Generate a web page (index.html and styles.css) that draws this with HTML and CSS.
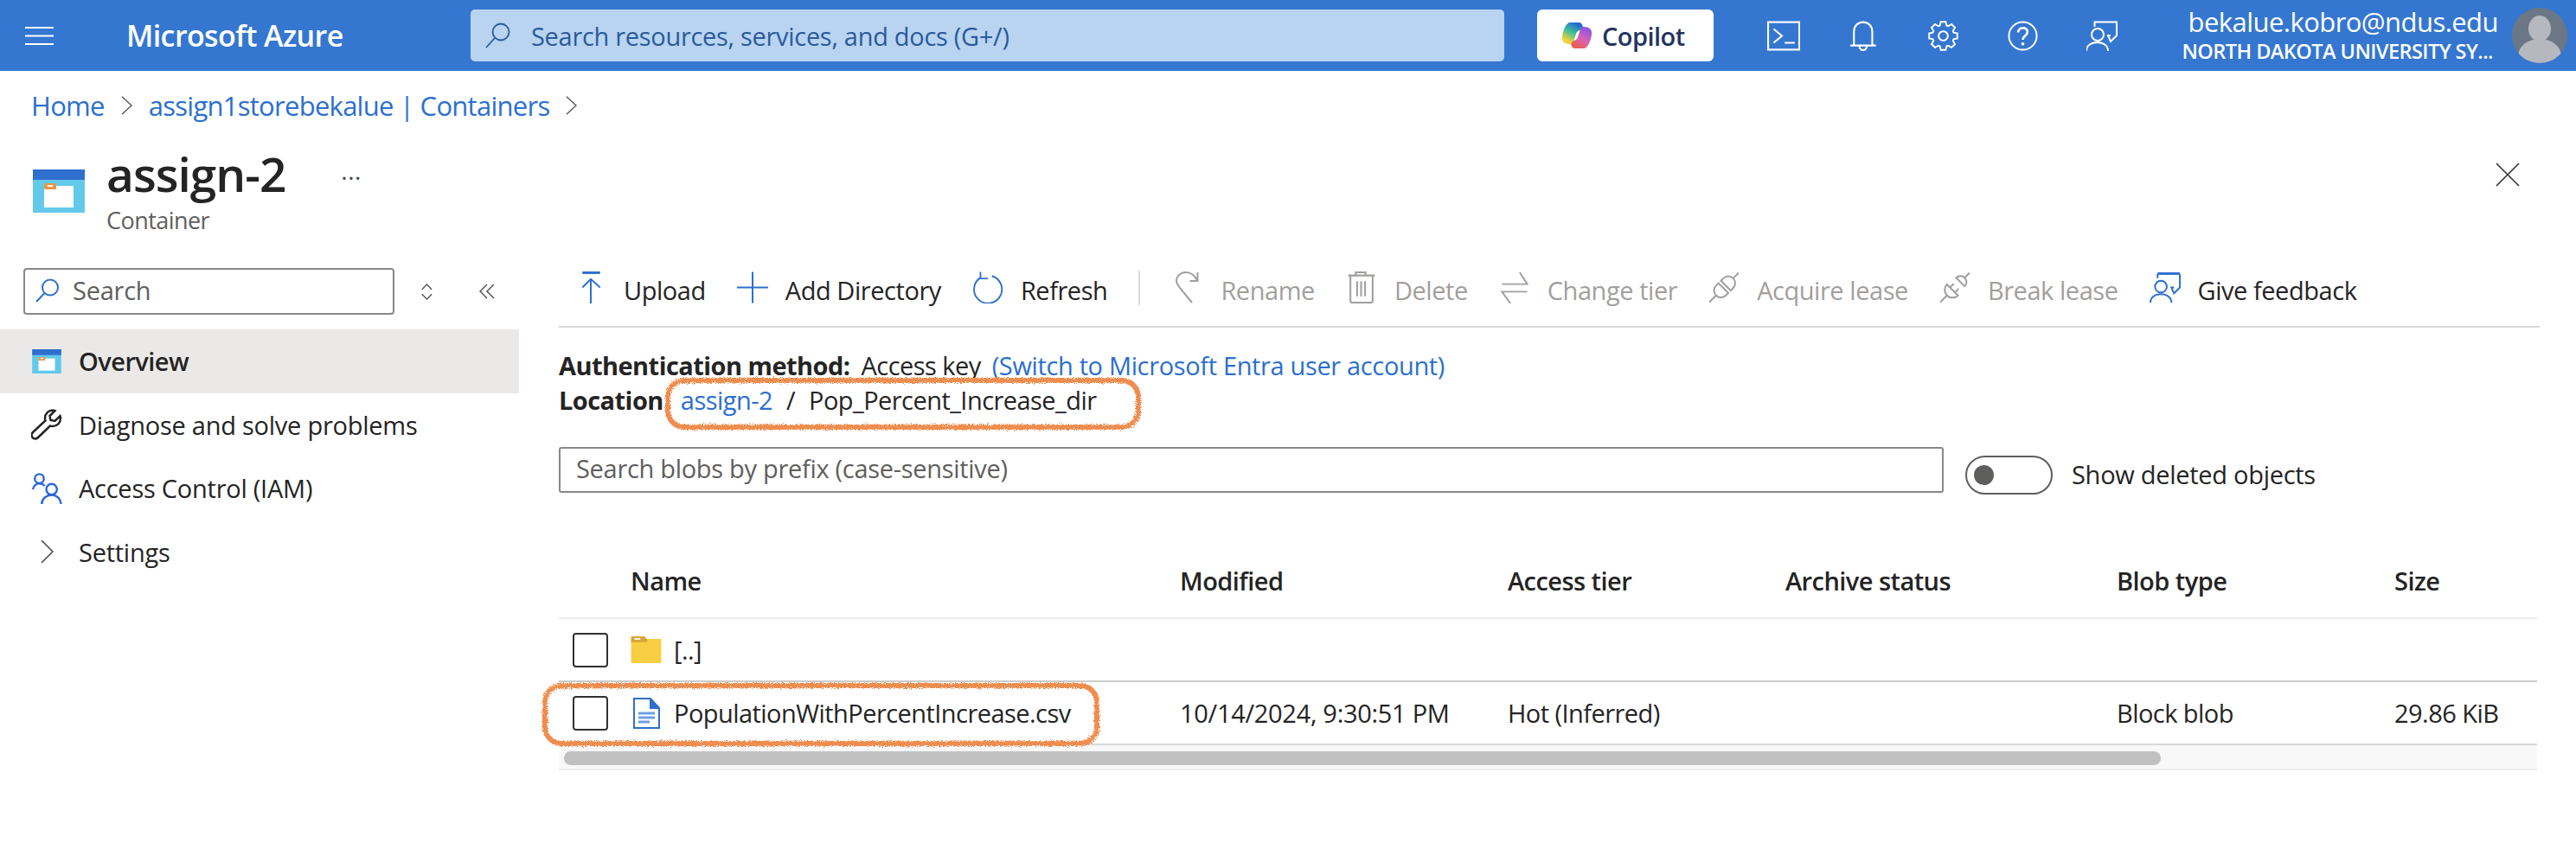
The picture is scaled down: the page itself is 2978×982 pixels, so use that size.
FILE: index.html
```html
<!DOCTYPE html>
<html lang="en">
<head>
  <meta charset="UTF-8" />
  <title>assign-2 - Microsoft Azure</title>
  <link rel="stylesheet" href="styles.css">
</head>
<body>

  <svg class="defs" width="0" height="0">
    <defs>
      <symbol id="containerIcon" viewBox="0 0 60 50">
        <rect width="60" height="50" fill="#62c9ea"/>
        <rect width="60" height="12" fill="#2f6fce"/>
        <rect x="13" y="19" width="34" height="25" fill="#fff"/>
        <rect x="13" y="16" width="14" height="7" rx="1" fill="#e8974a"/>
        <rect x="17" y="18" width="6" height="2" fill="#fff"/>
      </symbol>
      <filter id="rough">
        <feTurbulence type="fractalNoise" baseFrequency="1.1" numOctaves="2" seed="3"/>
        <feDisplacementMap in="SourceGraphic" scale="6"/>
      </filter>
    </defs>
  </svg>

  <!-- Top bar -->
  <header class="topbar">
    <svg class="menu-icon" viewBox="0 0 33 21"><path d="M0 1h33M0 10.500h33M0 20h33"/></svg>
    <div class="brand">Microsoft Azure</div>
    <div class="global-search">
      <svg class="global-search-icon" viewBox="0 0 30 30"><circle cx="18" cy="11" r="9.500"/><path d="M11 18L1 29"/></svg>
      <span>Search resources, services, and docs (G+/)</span>
    </div>
    <div class="copilot">
      <svg class="copilot-logo" viewBox="0 0 36 32">
        <defs>
          <linearGradient id="copA" x1="0.7" y1="0" x2="0.2" y2="1"><stop offset="0" stop-color="#1f62d8"/><stop offset="0.45" stop-color="#3dbd9a"/><stop offset="0.85" stop-color="#f0d23c"/></linearGradient>
          <linearGradient id="copB" x1="0.7" y1="0" x2="0.2" y2="1"><stop offset="0" stop-color="#8a55e4"/><stop offset="0.55" stop-color="#dc62b0"/><stop offset="1" stop-color="#e8613a"/></linearGradient>
        </defs>
        <path d="M10 1h10c3 0 4 2 5 5l-3 4c-3 0-4 2-5 4l-3 9c-1 3-2 3-4 3-6 0-10-3-9-9C2 9 6 1 10 1z" fill="url(#copA)"/>
        <path d="M26 31H16c-3 0-4-2-5-5l3-4c3 0 4-2 5-4l3-9c1-3 2-3 4-3 6 0 10 3 9 9-1 8-5 16-9 16z" fill="url(#copB)"/>
      </svg>
      <span>Copilot</span>
    </div>
    <div class="top-icons">
      <div class="top-icon">
        <svg viewBox="0 0 36 33"><rect x="1" y="1.500" width="34" height="30"/><path d="M7 9l9 7.500-9 7.500M19 24h11"/></svg>
      </div>
      <div class="top-icon">
        <svg viewBox="0 0 28 33"><path d="M4 26V12C4 6 8 1.500 14 1.500S24 6 24 12v14M0 27h28M10 27.500c0 6 8 6 8 0"/></svg>
      </div>
      <div class="top-icon">
        <svg viewBox="0 0 36 36"><polygon points="13.98,5.64 15.05,1.26 20.95,1.26 22.02,5.64 23.9,6.42 27.75,4.07 31.93,8.25 29.58,12.1 30.36,13.98 34.74,15.05 34.74,20.95 30.36,22.02 29.58,23.9 31.93,27.75 27.75,31.93 23.9,29.58 22.02,30.36 20.95,34.74 15.05,34.74 13.98,30.36 12.1,29.58 8.25,31.93 4.07,27.75 6.42,23.9 5.64,22.02 1.26,20.95 1.26,15.05 5.64,13.98 6.42,12.1 4.07,8.25 8.25,4.07 12.1,6.42"/><circle cx="18" cy="18" r="5.500"/></svg>
      </div>
      <div class="top-icon">
        <svg viewBox="0 0 36 36"><circle cx="18" cy="18" r="16.500"/><path class="thick" d="M12.500 14c0-7 11-7 11-1 0 5-5.500 5-5.500 9.500"/><circle class="dot" cx="18" cy="27.500" r="1.900"/></svg>
      </div>
      <div class="top-icon">
        <svg viewBox="0 0 36 35"><path d="M9.500 7V1.500H35V17L28 24 25 17h3M0 35c0-6 5-10 12.500-10S25 29 25 35"/><circle cx="13" cy="16" r="7"/></svg>
      </div>
    </div>
    <div class="user">
      <div class="user-mail">bekalue.kobro@ndus.edu</div>
      <div class="user-org">NORTH DAKOTA UNIVERSITY SY...</div>
    </div>
    <div class="avatar">
      <svg viewBox="0 0 64 64"><ellipse cx="32" cy="24" rx="13" ry="15" fill="#b5b9bf"/><ellipse cx="32" cy="56" rx="25" ry="20" fill="#b5b9bf"/></svg>
    </div>
  </header>

  <nav class="breadcrumb">
    <a>Home</a>
    <svg class="crumb-sep" viewBox="0 0 14 24"><path d="M1 1l12 11L1 23"/></svg>
    <a>assign1storebekalue | Containers</a>
    <svg class="crumb-sep" viewBox="0 0 14 24"><path d="M1 1l12 11L1 23"/></svg>
  </nav>

  <div class="page-head">
    <svg class="page-icon"><use href="#containerIcon"/></svg>
    <div class="page-title">
      <h1>assign-2</h1>
      <p>Container</p>
    </div>
    <div class="page-more">...</div>
    <svg class="page-close" viewBox="0 0 28 28"><path d="M1 1l26 26M27 1L1 27"/></svg>
  </div>

  <div class="layout">
    <!-- Left menu -->
    <aside class="sidebar">
      <div class="side-top">
        <div class="side-search">
          <svg viewBox="0 0 28 28"><circle cx="17" cy="10.500" r="9"/><path d="M10.500 17L1 27"/></svg>
          <span>Search</span>
        </div>
        <svg class="side-sort" viewBox="0 0 16 20"><path d="M2 7l6-6 6 6M2 13l6 6 6-6"/></svg>
        <svg class="side-collapse" viewBox="0 0 18 18"><path d="M9 1L1 9l8 8M17 1L9 9l8 8"/></svg>
      </div>
      <div class="side-item active">
        <svg class="side-icon" viewBox="0 0 36 28"><use href="#containerIcon" width="36" height="28"/></svg>
        <span>Overview</span>
      </div>
      <div class="side-item">
        <svg class="side-icon wrench" viewBox="0 0 36 36"><path d="M25 1.500c-5 0-9 4-9 9 0 1 0 2 .5 3L2 27c-2 2-2 4-.5 6s4.500 2 6.500 0l14-13.500c1 .5 2 .5 3 .5 5 0 9-4 9-9 0-1 0-2-.5-3l-6 6-5-1-1-5 6-6c-1-.5-2-.5-3-.5z"/></svg>
        <span>Diagnose and solve problems</span>
      </div>
      <div class="side-item">
        <svg class="side-icon people" viewBox="0 0 36 38"><circle cx="9" cy="7" r="5.500"/><path d="M1 20c1-4 4-7 8-7 3 0 5 1 6.500 3"/><circle cx="24" cy="20" r="6.500"/><path d="M12 38c0-6 5-11 12-11s11 5 11.500 11"/></svg>
        <span>Access Control (IAM)</span>
      </div>
      <div class="side-item">
        <svg class="side-chevron" viewBox="0 0 15 28"><path d="M1 1l13 13L1 27"/></svg>
        <span>Settings</span>
      </div>
    </aside>

    <main class="content">
      <div class="toolbar">
        <div class="tool">
          <svg viewBox="0 0 36 38"><path class="bar" d="M8 1.500h21"/><path d="M18 38V9M8 19L18 9l11 10"/></svg>
          <span>Upload</span>
        </div>
        <div class="tool">
          <svg viewBox="0 0 36 36"><path d="M18 0v36M0 18h36"/></svg>
          <span>Add Directory</span>
        </div>
        <div class="tool">
          <svg viewBox="0 0 38 38"><path d="M10 7a17 17 0 1 0 14-2M10 0v8h9"/></svg>
          <span>Refresh</span>
        </div>
        <div class="tool-divider"></div>
        <div class="tool disabled">
          <svg viewBox="0 0 30 37"><path d="M26.500 1v10h-9M26.500 11C23 4 18 1 13 1 6 1 2 6 2 11c0 3 2 5 4 8l14 17"/></svg>
          <span>Rename</span>
        </div>
        <div class="tool disabled">
          <svg viewBox="0 0 30 36"><path d="M0 4.500h30M8.500 4V1h11v3M2.500 5v28c0 1 1 2 2 2h21c1 0 2-1 2-2V5M10 11v17M14.500 11v17M19 11v17"/></svg>
          <span>Delete</span>
        </div>
        <div class="tool disabled">
          <svg viewBox="0 0 36 38"><path d="M3 15h30L24 1M33 24H3l10 14"/></svg>
          <span>Change tier</span>
        </div>
        <div class="tool disabled">
          <svg viewBox="0 0 36 36"><g transform="rotate(45 18 18)"><path d="M18 -6V3M18 31V42M10 15v-4a8 8 0 0 1 16 0v4zM10 19h16v4a8 8 0 0 1-16 0z"/></g></svg>
          <span>Acquire lease</span>
        </div>
        <div class="tool disabled">
          <svg viewBox="0 0 36 36"><g transform="rotate(45 18 18)"><path d="M18 -6V1M11 9a7 7 0 0 1 14 0zM9 22h18a9 9 0 0 1-18 0zM14 22v-6M22 22v-6M18 31V42"/></g></svg>
          <span>Break lease</span>
        </div>
        <div class="tool">
          <svg viewBox="0 0 37 36"><path class="bar" d="M9.500 1.500H36"/><path d="M9.500 7V2M36 2v16L29 25 26 18h3M1 36c0-6 5-10 12.500-10S26 30 26 36"/><circle cx="13.500" cy="17" r="7"/></svg>
          <span>Give feedback</span>
        </div>
      </div>

      <div class="info">
        <div class="info-line"><b>Authentication method:</b> <span class="key">Access key</span> <a class="entra">(Switch to Microsoft Entra user account)</a></div>
        <div class="info-line">
          <b>Location</b>
          <span class="path">
            <a>assign-2</a><span class="slash">/</span><span>Pop_Percent_Increase_dir</span>
            <span class="scribble scribble-path"></span>
          </span>
        </div>
      </div>

      <div class="filter-row">
        <div class="blob-search">Search blobs by prefix (case-sensitive)</div>
        <div class="toggle"><span class="knob"></span></div>
        <div class="toggle-label">Show deleted objects</div>
      </div>

      <div class="blobs">
        <div class="blob-row blob-head">
          <div></div>
          <div>Name</div>
          <div>Modified</div>
          <div>Access tier</div>
          <div>Archive status</div>
          <div>Blob type</div>
          <div>Size</div>
        </div>
        <div class="blob-row">
          <div><span class="check"></span></div>
          <div class="blob-name">
            <svg class="folder-icon" viewBox="0 0 36 32"><path d="M0 3h36v29H0z" fill="#f8cf42"/><path d="M0 1c0-1 1-1 1-1h15l4 5-2 2H0z" fill="#d9a43a"/><rect x="4" y="2" width="7" height="2" fill="#fff"/></svg>
            <span>[..]</span>
          </div>
          <div></div><div></div><div></div><div></div><div></div>
        </div>
        <div class="blob-row blob-last">
          <div><span class="check"></span></div>
          <div class="blob-name">
            <svg class="file-icon" viewBox="0 0 31 36"><path d="M1 1h19l10 11v23H1z" fill="#fff" stroke="#2f6fce" stroke-width="2"/><path d="M19 0l12 13H19z" fill="#2f6fce"/><path d="M6 18h19M6 23h19M6 28h13" stroke="#6f9fe6" stroke-width="3"/></svg>
            <span>PopulationWithPercentIncrease.csv</span>
          </div>
          <div class="wide">10/14/2024, 9:30:51 PM</div>
          <div>Hot (Inferred)</div>
          <div></div>
          <div>Block blob</div>
          <div>29.86 KiB</div>
          <span class="scribble scribble-row"></span>
        </div>
        <div class="scroll-track"><div class="scroll-thumb"></div></div>
      </div>
    </main>
  </div>
</body>
</html>
```

FILE: styles.css
```css
* {
  box-sizing: border-box;
}
body {
  margin: 0;
  font-family: "Open Sans", "Noto Sans", sans-serif;
  font-size: 29px;
  letter-spacing: -0.55px;
  color: #242424;
  background-color: #ffffff;
  overflow: hidden;
}
a {
  color: #2b6fd0;
}
svg {
  fill: none;
  flex: none;
}
.defs {
  position: absolute;
}

/* top bar */
.topbar {
  height: 82px;
  background-color: #3577d0;
  color: #ffffff;
  display: flex;
  align-items: center;
  padding-left: 29px;
}
.menu-icon {
  width: 33px;
  height: 21px;
  stroke: #ffffff;
  stroke-width: 2;
}
.brand {
  width: 398px;
  margin-left: 84px;
  font-size: 34px;
  font-weight: 600;
  letter-spacing: -0.6px;
}
.global-search {
  width: 1195px;
  height: 60px;
  background-color: #b9d4f0;
  border-radius: 5px;
  display: flex;
  align-items: center;
  gap: 23px;
  padding-left: 17px;
  color: #2a5a9c;
  letter-spacing: -0.3px;
}
.global-search-icon {
  width: 30px;
  height: 30px;
  stroke: #2a5a9c;
  stroke-width: 1.800;
}
.copilot {
  width: 204px;
  height: 60px;
  margin-left: 38px;
  background-color: #ffffff;
  border-radius: 6px;
  color: #1f3560;
  font-weight: 600;
  display: flex;
  align-items: center;
  gap: 11px;
  padding-left: 28px;
}
.copilot-logo {
  width: 36px;
  height: 32px;
}
.top-icons {
  display: flex;
  margin-left: 35px;
}
.top-icon {
  width: 92px;
  display: flex;
  justify-content: center;
}
.top-icon svg {
  height: 35px;
  stroke: #ffffff;
  stroke-width: 2;
}
.top-icon .thick {
  stroke-width: 2.800;
}
.top-icon .dot {
  fill: #ffffff;
  stroke: none;
}
.user {
  width: 412px;
  text-align: right;
  line-height: 1;
}
.user-mail {
  font-size: 31px;
  margin-bottom: 7px;
}
.user-org {
  font-size: 23.500px;
  font-weight: 600;
  padding-right: 6px;
}
.avatar {
  width: 64px;
  height: 64px;
  border-radius: 50%;
  margin-left: 16px;
  background-color: #6b7785;
  overflow: hidden;
}
.avatar svg {
  display: block;
}

/* breadcrumb and title */
.breadcrumb {
  height: 80px;
  display: flex;
  align-items: center;
  padding-left: 36px;
  gap: 19px;
  font-size: 31px;
  letter-spacing: -0.73px;
}
.crumb-sep {
  width: 13px;
  height: 24px;
  stroke: #555555;
  stroke-width: 1.500;
}
.page-head {
  height: 128px;
  display: flex;
  padding-left: 38px;
}
.page-icon {
  width: 60px;
  height: 50px;
  margin-top: 34px;
}
.page-title {
  margin-left: 25px;
}
.page-title h1 {
  margin: 0;
  font-size: 55px;
  font-weight: 600;
  letter-spacing: -1px;
  line-height: 70px;
  margin-top: 4px;
}
.page-title p {
  margin: 3px 0 0;
  font-size: 27px;
  line-height: 32px;
  color: #605e5c;
}
.page-more {
  margin-left: 64px;
  margin-top: 16px;
  font-size: 28px;
  letter-spacing: 0.5px;
  color: #444444;
}
.page-close {
  width: 28px;
  height: 28px;
  margin-left: auto;
  margin-right: 65px;
  margin-top: 26px;
  stroke: #323130;
  stroke-width: 1.600;
}

.layout {
  display: flex;
}

/* left menu */
.sidebar {
  width: 600px;
  flex: none;
  padding-top: 20px;
  letter-spacing: -0.25px;
}
.side-top {
  display: flex;
  align-items: center;
  padding-left: 27px;
  margin-bottom: 17px;
}
.side-search {
  width: 429px;
  height: 54px;
  border: 2px solid #8a8886;
  border-radius: 4px;
  display: flex;
  align-items: center;
  gap: 15px;
  padding-left: 12px;
  padding-bottom: 3px;
  color: #605e5c;
}
.side-search svg {
  width: 28px;
  height: 28px;
  stroke: #2b6fd0;
  stroke-width: 2;
}
.side-sort {
  width: 15px;
  height: 19px;
  margin-left: 30px;
  stroke: #555555;
  stroke-width: 1.500;
}
.side-collapse {
  width: 18px;
  height: 18px;
  margin-left: 53px;
  stroke: #555555;
  stroke-width: 1.500;
}
.side-item {
  height: 73.500px;
  display: flex;
  align-items: center;
  padding-left: 36px;
  gap: 19px;
}
.side-item.active {
  background-color: #ebe9e7;
  font-weight: 600;
  letter-spacing: -0.55px;
}
.side-icon {
  width: 36px;
  height: 36px;
}
.wrench {
  stroke: #242424;
  stroke-width: 2.500;
}
.people {
  stroke: #2a66d8;
  stroke-width: 2.500;
}
.side-chevron {
  width: 15px;
  height: 28px;
  margin-left: 11px;
  margin-right: 10px;
  stroke: #444444;
  stroke-width: 1.500;
}

/* main part */
.content {
  flex: 1;
  padding-left: 46px;
  padding-right: 42px;
}
.toolbar {
  height: 89px;
  border-bottom: 2px solid #d8d8d8;
  display: flex;
  gap: 36px;
  padding-left: 19px;
  padding-bottom: 2px;
  align-items: center;
  letter-spacing: -0.45px;
}
.tool {
  display: flex;
  align-items: center;
  gap: 20px;
}
.tool span {
  margin-top: 6px;
}
.tool svg {
  width: 36px;
  height: 37px;
  stroke: #2b6fd0;
  stroke-width: 2;
}
.tool .bar {
  stroke-width: 3;
}
.tool.disabled {
  color: #a19f9d;
}
.tool.disabled svg {
  stroke: #a19f9d;
}
.tool-divider {
  width: 2px;
  height: 40px;
  background-color: #dddddd;
  margin-right: 1px;
}
.info {
  margin-top: 24px;
}
.info-line {
  height: 40px;
  line-height: 40px;
  white-space: nowrap;
  display: flex;
  gap: 13px;
}
.info-line b {
  font-weight: 700;
}
.entra {
  letter-spacing: -0.35px;
}
.path {
  position: relative;
  display: flex;
  margin-left: 7px;
}
.slash {
  margin: 0 16px;
}
.scribble {
  position: absolute;
  border: 6px solid #ef8d50;
  border-radius: 22px;
  filter: url(#rough);
  pointer-events: none;
}
.scribble-path {
  left: -18px;
  top: -6px;
  width: 550px;
  height: 60px;
}
.scribble-row {
  left: -19px;
  top: 1px;
  width: 644px;
  height: 73px;
}
.filter-row {
  display: flex;
  align-items: flex-start;
  margin-top: 34px;
}
.blob-search {
  width: 1601px;
  height: 53px;
  border: 2px solid #8a8886;
  border-radius: 3px;
  line-height: 46px;
  padding-left: 18px;
  color: #605e5c;
  letter-spacing: -0.3px;
}
.toggle {
  width: 101px;
  height: 45px;
  margin-left: 25px;
  margin-top: 10px;
  border: 2px solid #605e5c;
  border-radius: 23px;
  display: flex;
  align-items: center;
  padding-left: 8px;
}
.knob {
  width: 23px;
  height: 23px;
  border-radius: 50%;
  background-color: #605e5c;
}
.toggle-label {
  margin-left: 22px;
  margin-top: 12px;
  letter-spacing: -0.28px;
}

/* blob list */
.blobs {
  margin-top: 60px;
  width: 2287px;
}
.blob-row {
  position: relative;
  display: grid;
  grid-template-columns: 83px 635px 379px 321px 383px 321px 165px;
  align-items: center;
  height: 73px;
  border-bottom: 2px solid #cccccc;
  white-space: nowrap;
}
.blob-head {
  height: 84px;
  padding-bottom: 4px;
  border-bottom-color: #ececec;
  font-weight: 600;
}
.blob-last {
  border-bottom-color: #d8d8d8;
}
.wide {
  letter-spacing: -0.3px;
}
.check {
  display: block;
  width: 41px;
  height: 40px;
  margin-left: 16px;
  border: 2px solid #323130;
  border-radius: 4px;
}
.blob-name {
  display: flex;
  align-items: center;
}
.folder-icon {
  width: 36px;
  height: 31px;
  margin-right: 14px;
}
.file-icon {
  width: 31px;
  height: 36px;
  margin-left: 3px;
  margin-right: 16px;
}
.scroll-track {
  height: 29px;
  padding: 7px 0 0 6px;
  background-color: #f8f8f8;
  border-bottom: 2px solid #eeeeee;
}
.scroll-thumb {
  width: 1846px;
  height: 16px;
  border-radius: 8px;
  background-color: #c0c0c0;
}
```
